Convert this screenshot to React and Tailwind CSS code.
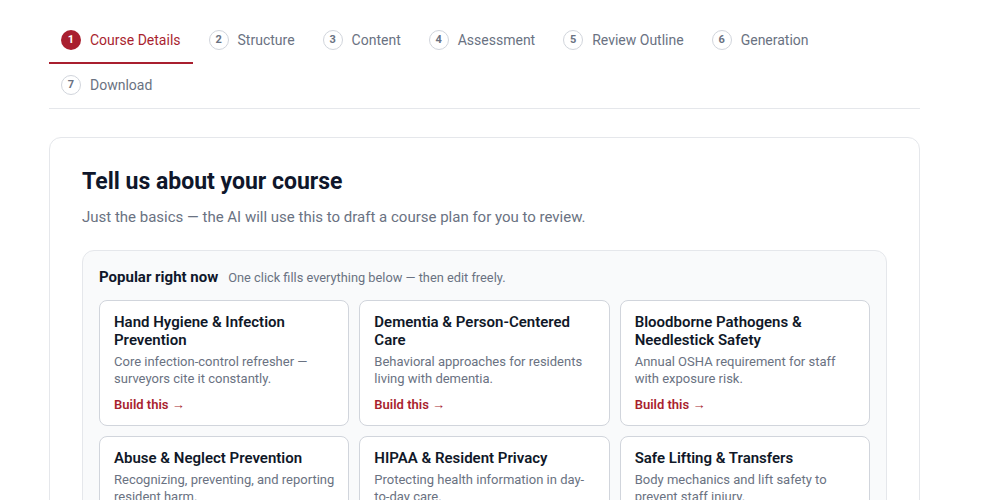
import React, { useState } from 'react';

const steps = [
  'Course Details',
  'Structure',
  'Content',
  'Assessment',
  'Review Outline',
  'Generation',
  'Download',
];

const popular = [
  {
    title: 'Hand Hygiene & Infection Prevention',
    desc: 'Core infection-control refresher — surveyors cite it constantly.',
  },
  {
    title: 'Dementia & Person-Centered Care',
    desc: 'Behavioral approaches for residents living with dementia.',
  },
  {
    title: 'Bloodborne Pathogens & Needlestick Safety',
    desc: 'Annual OSHA requirement for staff with exposure risk.',
  },
  {
    title: 'Abuse & Neglect Prevention',
    desc: 'Recognizing, preventing, and reporting resident harm.',
  },
  {
    title: 'HIPAA & Resident Privacy',
    desc: 'Protecting health information in day-to-day care.',
  },
  {
    title: 'Safe Lifting & Transfers',
    desc: 'Body mechanics and lift safety to prevent staff injury.',
  },
];

const StepTabs = ({ active }) => (
  <div className="flex flex-wrap gap-x-1 border-b border-gray-200">
    {steps.map((label, i) => {
      const isActive = i === active;
      return (
        <div
          key={label}
          className={
            isActive
              ? 'flex items-center gap-[9px] px-3 pt-3 pb-3 border-b-2 border-[#a91f2f] -mb-px'
              : 'flex items-center gap-[9px] px-3 pt-3 pb-3 border-b-2 border-transparent -mb-px'
          }
        >
          <span
            className={
              isActive
                ? 'flex h-5 w-5 items-center justify-center rounded-full bg-[#a91f2f] text-[11px] font-bold text-white'
                : 'flex h-5 w-5 items-center justify-center rounded-full border border-gray-300 bg-white text-[11px] font-bold text-gray-500'
            }
          >
            {i + 1}
          </span>
          <span className={isActive ? 'text-sm text-[#a91f2f]' : 'text-sm text-gray-500'}>
            {label}
          </span>
        </div>
      );
    })}
  </div>
);

const PopularCard = ({ title, desc }) => (
  <button className="flex flex-col items-start rounded-lg border border-gray-300 bg-white px-3.5 pt-3 pb-3 text-left">
    <div className="text-[15px] font-semibold leading-[18px] text-gray-900">{title}</div>
    <div className="mt-1 text-[13px] leading-[17px] text-gray-500">{desc}</div>
    <div className="mt-2.5 text-[13px] font-semibold leading-4 text-[#a91f2f]">Build this →</div>
  </button>
);

export default function App() {
  const [active] = useState(0);

  return (
    <div className="min-h-screen bg-white font-['Roboto',sans-serif]">
      <div className="ml-[49px] w-[871px] pt-[18px]">
        <StepTabs active={active} />

        <div className="mt-7 rounded-xl border border-gray-200 bg-white px-8 pt-7 pb-8">
          <h1 className="text-[23px] font-bold leading-8 text-slate-900">
            Tell us about your course
          </h1>
          <p className="mt-2 text-[15px] text-gray-500">
            Just the basics — the AI will use this to draft a course plan for you to review.
          </p>

          <div className="mt-[21px] rounded-xl border border-gray-200 bg-gray-50 p-4">
            <div className="mb-3 flex items-baseline gap-2.5 leading-5">
              <span className="text-[15px] font-bold leading-5 text-slate-900">Popular right now</span>
              <span className="text-[12.8px] leading-5 text-gray-500">
                One click fills everything below — then edit freely.
              </span>
            </div>
            <div className="grid grid-cols-3 gap-2.5">
              {popular.map((p) => (
                <PopularCard key={p.title} title={p.title} desc={p.desc} />
              ))}
            </div>
          </div>
        </div>
      </div>
    </div>
  );
}
